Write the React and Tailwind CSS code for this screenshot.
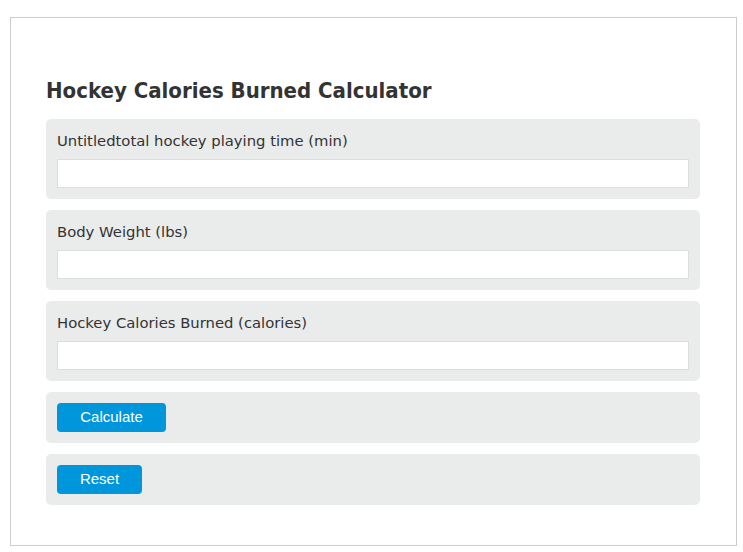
export default function App() {
  const fields = [
    'Untitledtotal hockey playing time (min)',
    'Body Weight (lbs)',
    'Hockey Calories Burned (calories)',
  ]

  return (
    <div className="min-h-screen bg-white pt-[17px] pl-[10px]">
      <div className="w-[727px] h-[529px] border border-[#cccccc] bg-white px-[35px] pt-[58px]">
        <h1
          className="text-[22px] font-bold text-[#333333] leading-[30px] mb-[13px]"
          style={{ fontFamily: '"DejaVu Sans Condensed", "DejaVu Sans", sans-serif' }}
        >
          Hockey Calories Burned Calculator
        </h1>

        <div className="flex flex-col gap-[11px] w-[654px]">
          {fields.map((label) => (
            <div key={label} className="bg-[#eaebeb] rounded-[5px] px-[11px] pt-[12px] pb-[11px]">
              <label
                className="block text-[14.8px] text-[#333333] leading-[20px] mb-[8px]"
                style={{ fontFamily: '"DejaVu Sans", sans-serif' }}
              >
                {label}
              </label>
              <input
                type="text"
                className="block w-full h-[29px] bg-white border border-[#dddddd] outline-none"
              />
            </div>
          ))}

          <div className="bg-[#eaebeb] rounded-[5px] px-[11px] py-[11px]">
            <button
              className="block w-[109px] h-[29px] rounded-[4px] bg-[#0096db] text-white text-[15px]"
              style={{ fontFamily: '"Liberation Sans", Arial, sans-serif' }}
            >
              Calculate
            </button>
          </div>

          <div className="bg-[#eaebeb] rounded-[5px] px-[11px] py-[11px]">
            <button
              className="block w-[85px] h-[29px] rounded-[4px] bg-[#0096db] text-white text-[15px]"
              style={{ fontFamily: '"Liberation Sans", Arial, sans-serif' }}
            >
              Reset
            </button>
          </div>
        </div>
      </div>
    </div>
  )
}
